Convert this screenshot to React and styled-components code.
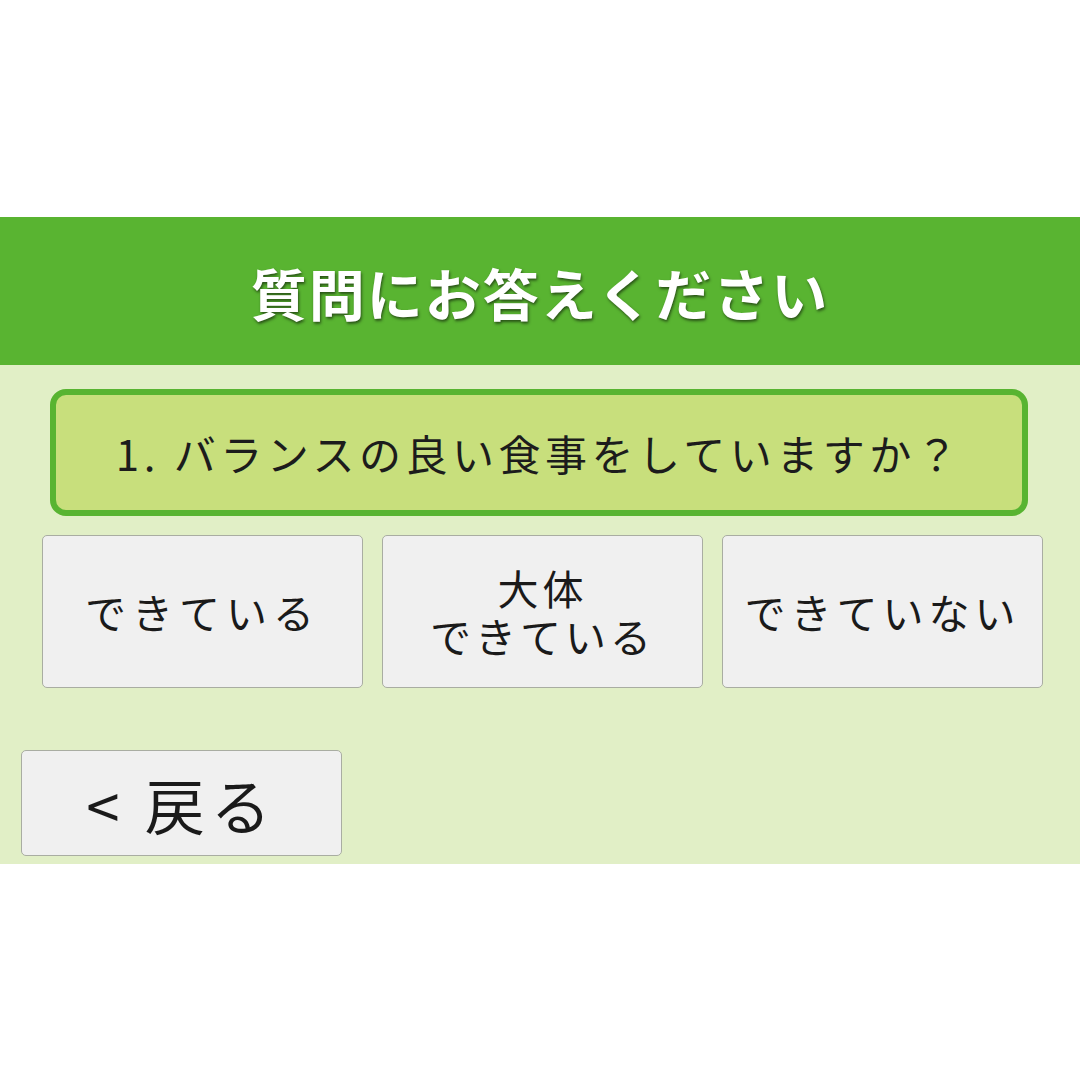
import React from "react";
import styled, { createGlobalStyle } from "styled-components";

const GlobalStyle = createGlobalStyle`
  html, body {
    margin: 0;
    padding: 0;
    background: #ffffff;
  }
  body {
    font-family: "Noto Sans CJK JP", "Noto Sans", sans-serif;
  }
`;

const Page = styled.div`
  width: 1080px;
  height: 1080px;
  display: flex;
  flex-direction: column;
  justify-content: center;
  padding-top: 1px;
  box-sizing: border-box;
`;

const Panel = styled.div`
  height: 647px;
  background: #e1efc6;
  display: flex;
  flex-direction: column;
`;

const Header = styled.h1`
  margin: 0;
  height: 148px;
  background: #59b431;
  color: #ffffff;
  display: flex;
  align-items: center;
  justify-content: center;
  font-family: "Noto Sans CJK JP", sans-serif;
  font-weight: 700;
  font-size: 56px;
  letter-spacing: 2px;
  text-shadow: 1px 2px 3px rgba(0, 0, 0, 0.55);
`;

const Body = styled.div`
  display: flex;
  flex-direction: column;
  padding: 24px 37px 0 42px;
`;

const Question = styled.div`
  margin: 0 15px 0 8px;
  height: 127px;
  box-sizing: border-box;
  border: 6px solid #58b431;
  border-radius: 16px;
  background: #c8df7c;
  display: flex;
  align-items: center;
  justify-content: center;
  font-size: 42px;
  letter-spacing: 4.5px;
  color: #1c1c1c;
`;

const Choices = styled.div`
  margin-top: 19px;
  display: grid;
  grid-template-columns: repeat(3, 321px);
  gap: 19px;
`;

const Button = styled.button`
  height: ${(p) => p.$height || 153}px;
  width: ${(p) => p.$width || 321}px;
  box-sizing: border-box;
  border: 1.5px solid #a9ada2;
  border-radius: 5px;
  background: #f0f0f0;
  color: #1a1a1a;
  font-family: "Noto Sans CJK JP", sans-serif;
  font-size: ${(p) => p.$size || 41}px;
  letter-spacing: ${(p) => p.$spacing ?? 6}px;
  line-height: 1.15;
  padding: 0;
  display: flex;
  align-items: center;
  justify-content: center;
  text-align: center;
`;

const BackRow = styled.div`
  margin-top: 62px;
  margin-left: -21px;
`;

function App() {
  return (
    <>
      <GlobalStyle />
      <Page>
        <Panel>
          <Header>質問にお答えください</Header>
          <Body>
            <Question>1. バランスの良い食事をしていますか？</Question>
            <Choices>
              <Button>できている</Button>
              <Button $spacing={4}>
                大体
                <br />
                できている
              </Button>
              <Button $spacing={5}>できていない</Button>
            </Choices>
            <BackRow>
              <Button $height={106} $size={60} $spacing={6}>
                &lt; 戻る
              </Button>
            </BackRow>
          </Body>
        </Panel>
      </Page>
    </>
  );
}

export default App;
